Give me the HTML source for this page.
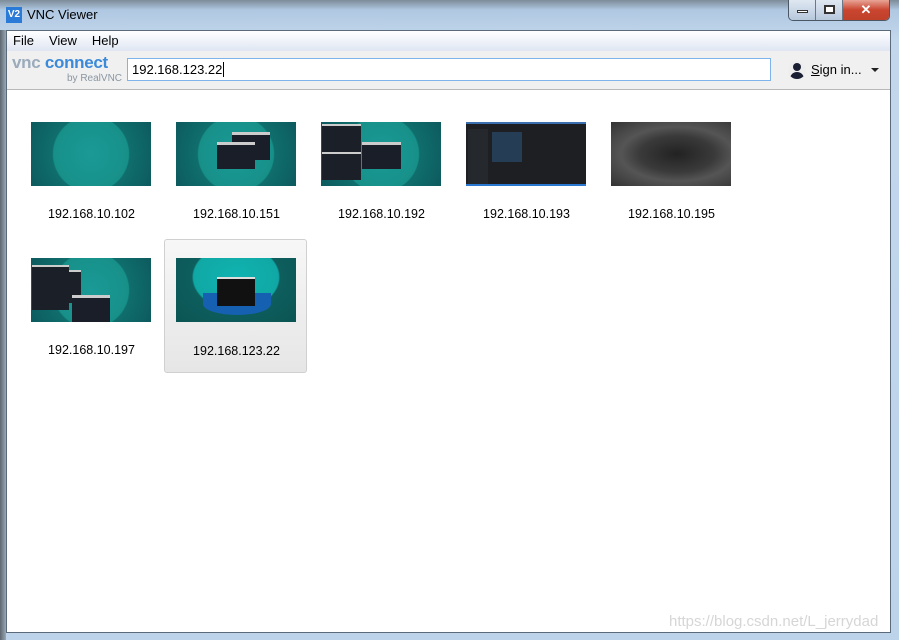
<!DOCTYPE html>
<html><head><meta charset="utf-8"><style>
*{margin:0;padding:0;box-sizing:border-box}
body{width:899px;height:640px;overflow:hidden;background:#6d7e92;font-family:"Liberation Sans",sans-serif;position:relative}
.frame{position:absolute;left:0;top:0;width:899px;height:640px;background:linear-gradient(#a9c3de,#c3d7ec 40px,#bcd3ea);}
.frame:before{content:"";position:absolute;left:0;top:30px;width:6px;height:610px;background:linear-gradient(90deg,#5c6670,#9aa8b6)}
.tb{position:absolute;left:0;top:0;width:899px;height:10px;background:linear-gradient(#7e8c99,rgba(170,195,222,0))}
.title{position:absolute;left:27px;top:7px;font-size:13px;color:#000}
.icon{position:absolute;left:6px;top:7px;width:16px;height:16px;background:#2a7ad8;color:#fff;font-size:10px;font-weight:bold;text-align:center;line-height:16px}
.btns{position:absolute;left:788px;top:0;height:21px;width:102px;border:1px solid #4a5866;border-top:none;border-radius:0 0 5px 5px;overflow:hidden;display:flex}
.btns div{height:20px;background:linear-gradient(#dfe8f2,#b7c8dc);border-right:1px solid #6a7888}
.client{position:absolute;left:6px;top:30px;width:885px;height:603px;border:1px solid #5a6a7a;background:#fff}
.menu{height:20px;background:linear-gradient(#fff,#dfe6f2);font-size:13px;padding-left:6px;line-height:20px}
.menu span{margin-right:15px}
.tool{height:39px;background:#f0f0f0;border-bottom:1px solid #b8b8b8;position:relative}
.addr{position:absolute;left:120px;top:7px;width:644px;height:23px;border:1px solid #7eb4ea;background:#fff;font-size:13px;padding:3px 4px}
.tile{position:absolute;width:143px;height:134px;text-align:center;font-size:12.5px}
.tile .th{position:absolute;left:11px;top:12px;width:120px;height:64px;overflow:hidden}
.tile .lb{position:absolute;left:0;width:143px;top:97px}
.sel{background:linear-gradient(#f7f7f7,#e6e6e6);border:1px solid #d0d0d0;border-radius:3px}
.teal{background:radial-gradient(circle at 50% 50%,#1a9a96 0,#179089 55%,#0f6e6c 57%,#0d5a5e 100%)}
</style></head><body>
<div class="frame"><div class="tb"></div>
<div class="icon">V2</div><div class="title">VNC Viewer</div>
<div class="btns"><div style="width:27px"><div style="margin:10px 8px;width:11px;height:3px;background:#fff;border:1px solid #333"></div></div><div style="width:27px"><div style="margin:5px 8px;width:11px;height:9px;border:2px solid #333;background:#fff"></div></div><div style="width:46px;background:linear-gradient(#e8a496,#c9452f 50%,#c0402a);border:none;color:#fff;font-weight:bold;text-align:center;font-size:13px;line-height:20px">✕</div></div>
</div>
<div class="client">
<div class="menu"><span>File</span><span>View</span><span>Help</span></div>
<div class="tool">
<div style="position:absolute;left:5px;top:2px;font-size:17px;letter-spacing:-0.3px;font-weight:bold"><span style="color:#9aabbc">vnc</span> <span style="color:#3b8ad9">connect</span></div>
<div style="position:absolute;left:60px;top:22px;font-size:10px;color:#8a96a2">by RealVNC</div>
<div class="addr">192.168.123.22<span style="border-left:1px solid #000;margin-left:1px"></span></div>
<div style="position:absolute;left:781px;top:10px;width:18px;height:18px;border-radius:50%;background:#eee;overflow:hidden"><div style="margin:2px auto 0;width:8px;height:8px;border-radius:50%;background:#1b1f33"></div><div style="margin:1px auto;width:14px;height:9px;border-radius:7px 7px 0 0;background:#1b1f33"></div></div>
<div style="position:absolute;left:804px;top:11px;font-size:13px"><u>S</u>ign in...</div>
<div style="position:absolute;left:864px;top:17px;border:4px solid transparent;border-top:4px solid #222"></div>
</div>
</div>
<div class="tile" style="left:20px;top:110px"><div class="th teal"></div><div class="lb">192.168.10.102</div></div>
<div class="tile" style="left:165px;top:110px"><div class="th teal"><div style="position:absolute;left:56px;top:10px;width:38px;height:28px;background:#1a1e28;border-top:3px solid #ccc"></div><div style="position:absolute;left:41px;top:20px;width:38px;height:27px;background:#1a1e28;border-top:3px solid #ccc"></div></div><div class="lb">192.168.10.151</div></div>
<div class="tile" style="left:310px;top:110px"><div class="th teal"><div style="position:absolute;left:1px;top:2px;width:39px;height:28px;background:#1b1f28;border-top:2px solid #ccc"></div><div style="position:absolute;left:1px;top:30px;width:39px;height:28px;background:#1b1f28;border-top:2px solid #ccc"></div><div style="position:absolute;left:41px;top:20px;width:39px;height:27px;background:#1a1e28;border-top:3px solid #ccc"></div></div><div class="lb">192.168.10.192</div></div>
<div class="tile" style="left:455px;top:110px"><div class="th" style="background:#1e1f22;border-top:2px solid #3b6fb0;border-bottom:2px solid #2a78d0"><div style="position:absolute;left:26px;top:8px;width:30px;height:30px;background:#2a4a6c;opacity:.7"></div><div style="position:absolute;left:2px;top:5px;width:20px;height:55px;background:#25282c"></div></div><div class="lb">192.168.10.193</div></div>
<div class="tile" style="left:600px;top:110px"><div class="th" style="background:radial-gradient(ellipse at 55% 50%,#222 0,#3a3a3a 40%,#555 60%,#333 100%)"></div><div class="lb">192.168.10.195</div></div>
<div class="tile" style="left:20px;top:246px"><div class="th teal"><div style="position:absolute;left:1px;top:7px;width:37px;height:45px;background:#1b1f28;border-top:2px solid #ccc"></div><div style="position:absolute;left:38px;top:12px;width:12px;height:33px;background:#1b1f28;border-top:2px solid #ccc"></div><div style="position:absolute;left:41px;top:37px;width:38px;height:27px;background:#1a1e28;border-top:3px solid #ccc"></div></div><div class="lb">192.168.10.197</div></div>
<div class="tile sel" style="left:164px;top:239px"><div class="th" style="top:18px;background:radial-gradient(ellipse at 50% 30%,#0fb3b0 0,#10a8a5 50%,#0e5e5e 52%,#0a5553 100%)"><div style="position:absolute;left:27px;top:35px;width:68px;height:22px;background:#1560b0;border-radius:0 0 50% 50%"></div><div style="position:absolute;left:41px;top:19px;width:38px;height:29px;background:#111;border-top:2px solid #ddd"></div></div><div class="lb" style="top:104px">192.168.123.22</div></div>
<div style="position:absolute;left:669px;top:613px;font-size:15px;color:#d6d6d6">https://blog.csdn.net/L_jerrydad</div>
</body></html>
